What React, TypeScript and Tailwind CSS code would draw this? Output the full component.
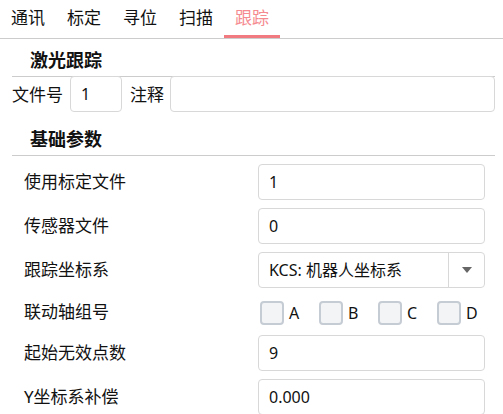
import { useState } from 'react';

const tabs = ['通讯', '标定', '寻位', '扫描', '跟踪'];

const font = { fontFamily: '"Noto Sans", "Noto Sans CJK SC", sans-serif' };

function TextInput({ value, className = '' }: { value: string; className?: string }) {
  return (
    <input
      defaultValue={value}
      className={`h-9 rounded border border-[#d8d8d8] bg-white px-2.5 text-[16px] text-[#111] outline-none ${className}`}
    />
  );
}

function Row({ label, children, tall = true }: { label: string; children: React.ReactNode; tall?: boolean }) {
  return (
    <div className={`flex items-center ${tall ? 'h-9' : 'h-[31px]'}`}>
      <span className="w-[234px] shrink-0 text-[17px] text-[#111]">{label}</span>
      <div className="w-[227px]">{children}</div>
    </div>
  );
}

export default function App() {
  const [active, setActive] = useState(4);
  const [axes, setAxes] = useState<Record<string, boolean>>({});

  return (
    <div className="h-[414px] w-[503px] overflow-hidden bg-white" style={font}>
      <div className="flex h-[39px] border-b border-[#cccccc]">
        {tabs.map((tab, i) => (
          <button
            key={tab}
            onClick={() => setActive(i)}
            className={`h-[38px] w-14 border-b-[3px] pt-px text-[17px] ${
              i === active ? 'border-[#f07a80] text-[#f58a90]' : 'border-transparent text-[#111]'
            }`}
          >
            {tab}
          </button>
        ))}
      </div>

      <div className="ml-3 mr-2">
        <h2 className="pl-[18px] pt-[9px] text-[18px] leading-6 font-bold text-[#111]">激光跟踪</h2>
        <div className="mt-[4px] flex items-center border-t border-[#cccccc]">
          <span className="w-[58px] text-[17px] text-[#111]">文件号</span>
          <TextInput value="1" className="-mt-px w-[52px]" />
          <span className="ml-[8px] w-[40px] text-[17px] text-[#111]">注释</span>
          <TextInput value="" className="-mt-px flex-1" />
        </div>

        <h2 className="mt-[15px] pl-[18px] text-[18px] leading-6 font-bold text-[#111]">基础参数</h2>
        <div className="mt-[4px] border-t border-[#cccccc]" />

        <div className="mt-2 flex flex-col gap-2 pl-3">
          <Row label="使用标定文件">
            <TextInput value="1" className="w-full" />
          </Row>
          <Row label="传感器文件">
            <TextInput value="0" className="w-full" />
          </Row>
          <Row label="跟踪坐标系">
            <div className="flex h-9 w-full items-center rounded border border-[#d8d8d8] bg-white">
              <span className="flex-1 px-2.5 text-[16px] text-[#111]">KCS: 机器人坐标系</span>
              <span className="flex h-full w-[36px] items-center justify-center border-l border-[#d8d8d8]">
                <svg width="10" height="6" viewBox="0 0 10 6">
                  <path d="M0 0h10L5 6z" fill="#666" />
                </svg>
              </span>
            </div>
          </Row>
          <Row label="联动轴组号" tall={false}>
            <div className="mt-[3px] flex items-center">
              {['A', 'B', 'C', 'D'].map((k) => (
                <label key={k} className="flex w-[59px] shrink-0 items-center">
                  <span
                    onClick={() => setAxes({ ...axes, [k]: !axes[k] })}
                    className="ml-[2px] h-6 w-6 shrink-0 rounded border-2 border-[#c6ccd4] bg-[#f2f4f6]"
                  />
                  <span className="ml-[5px] text-[16px] text-[#111]">{k}</span>
                </label>
              ))}
            </div>
          </Row>
          <Row label="起始无效点数">
            <TextInput value="9" className="w-full" />
          </Row>
          <Row label="Y坐标系补偿">
            <TextInput value="0.000" className="w-full" />
          </Row>
        </div>
      </div>
    </div>
  );
}
